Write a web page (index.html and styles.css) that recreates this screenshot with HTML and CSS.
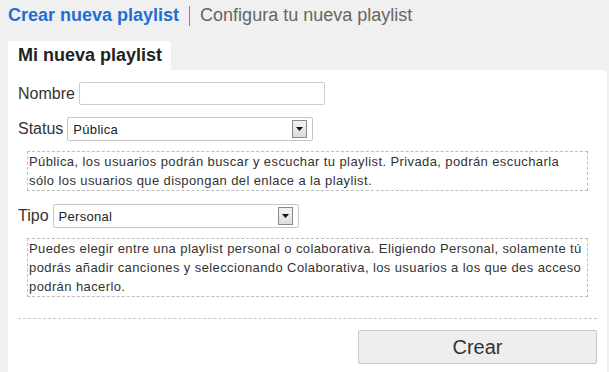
FILE: index.html
```html
<!DOCTYPE html>
<html lang="es">
<head>
<meta charset="utf-8">
<title>Crear nueva playlist</title>
<link rel="stylesheet" href="styles.css">
</head>
<body>
<header class="steps">
  <span class="step step-active">Crear nueva playlist</span>
  <span class="step-sep"></span>
  <span class="step">Configura tu nueva playlist</span>
</header>
<nav class="tabs">
  <div class="tab">Mi nueva playlist</div>
</nav>
<main class="panel">
  <div class="row row-first">
    <label class="label" for="nombre">Nombre</label>
    <input class="text-input" id="nombre" type="text">
  </div>
  <div class="row row-gap">
    <span class="label">Status</span>
    <div class="select">
      <span class="select-value">Pública</span>
      <span class="select-arrow"><svg width="7" height="4" viewBox="0 0 7 4"><path d="M0 0H7L3.5 4Z" fill="#111"/></svg></span>
    </div>
  </div>
  <div class="hint">Pública, los usuarios podrán buscar y escuchar tu playlist. Privada, podrán escucharla sólo los usuarios que dispongan del enlace a la playlist.</div>
  <div class="row row-gap2">
    <span class="label">Tipo</span>
    <div class="select">
      <span class="select-value">Personal</span>
      <span class="select-arrow"><svg width="7" height="4" viewBox="0 0 7 4"><path d="M0 0H7L3.5 4Z" fill="#111"/></svg></span>
    </div>
  </div>
  <div class="hint">Puedes elegir entre una playlist personal o colaborativa. Eligiendo Personal, solamente tú podrás añadir canciones y seleccionando Colaborativa, los usuarios a los que des acceso podrán hacerlo.</div>
  <hr class="divider">
  <div class="actions">
    <button class="btn" type="button">Crear</button>
  </div>
</main>
</body>
</html>
```
FILE: styles.css
```css
* { box-sizing: border-box; }
html, body { margin: 0; }
body {
  background: #f0f0f0;
  font-family: "Liberation Sans", Arial, sans-serif;
  color: #333;
  padding-left: 8px;
  overflow: hidden;
}
.steps {
  display: flex;
  align-items: center;
  height: 31px;
}
.step {
  font-size: 18px;
  color: #666;
  line-height: 21px;
}
.step-active {
  color: #1e6fd2;
  font-weight: bold;
}
.step-sep {
  width: 1px;
  height: 20px;
  background: #888;
  margin: 0 10px;
}
.tabs {
  display: flex;
  margin-top: 10px;
}
.tab {
  background: #fff;
  border-radius: 3px 3px 0 0;
  padding: 4px 9px 4px 10px;
  height: 29px;
  font-size: 18px;
  line-height: 21px;
  font-weight: bold;
  color: #222;
}
.panel {
  background: #fff;
  width: 599px;
  border-radius: 0 4px 0 0;
  padding: 12px 10px 20px 10px;
  min-height: 320px;
}
.row {
  display: flex;
  align-items: center;
  gap: 4px;
}
.row-gap { margin-top: 12px; }
.row-gap2 { margin-top: 13px; }
.label {
  font-size: 16px;
  color: #333;
}
.text-input {
  width: 246px;
  height: 23px;
  border: 1px solid #ccc;
  border-radius: 2px;
  margin: 0;
  padding: 0 4px;
  font: 13px "Liberation Sans", Arial, sans-serif;
}
.select {
  width: 246px;
  height: 24px;
  border: 1px solid #c6c6c6;
  border-radius: 2px;
  display: flex;
  align-items: center;
  padding: 0 5px;
}
.select-value {
  flex: 1;
  font-size: 13px;
  letter-spacing: 0.3px;
  color: #222;
}
.select-arrow {
  width: 15px;
  height: 18px;
  border: 1px solid #8a8a8a;
  background: linear-gradient(#f4f4f4, #dcdcdc);
  display: flex;
  align-items: center;
  justify-content: center;
}
.select-arrow svg { display: block; }
.hint {
  margin: 10px 0 0 9px;
  width: 561px;
  border: 1px dashed #bdbdbd;
  padding: 0 2px 0 1px;
  font-size: 13px;
  letter-spacing: 0.4px;
  line-height: 19px;
  color: #333;
}
.divider {
  border: 0;
  border-top: 1px dashed #c8c8c8;
  margin: 21px 0 0 0;
  height: 0;
}
.actions {
  display: flex;
  justify-content: flex-end;
  margin-top: 11px;
}
.btn {
  width: 239px;
  height: 34px;
  background: #eee;
  border: 1px solid #c8c8c8;
  border-radius: 2px;
  font: 20px "Liberation Sans", Arial, sans-serif;
  color: #333;
  padding: 0;
}
```
